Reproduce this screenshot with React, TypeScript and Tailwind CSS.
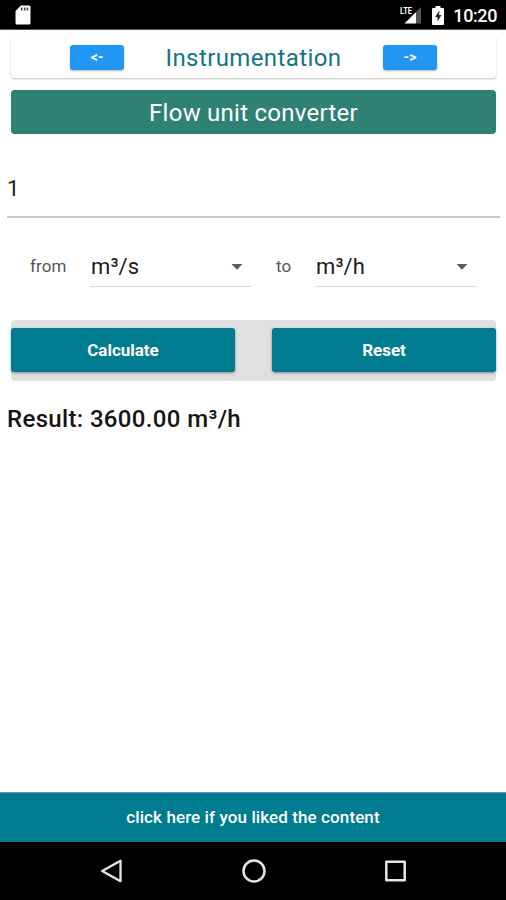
import React, { useState } from 'react';

const UNITS: Record<string, number> = {
  'm³/s': 1,
  'm³/h': 3600,
};

interface UnitSelectProps {
  value: string;
}

const UnitSelect: React.FC<UnitSelectProps> = ({ value }) => (
  <button className="flex h-[39px] w-[162px] items-center justify-between border-b border-[#dcdcdc] pr-[9px] pb-[1px] pl-[1px] text-[22px] tracking-[0.1px] text-[#1c1c1c]">
    <span>{value}</span>
    <svg width="12" height="6" viewBox="0 0 12 6" fill="#5c5c5c" className="mt-[1px]">
      <path d="M0.5 0h11L6 5.8z" />
    </svg>
  </button>
);

const StatusBar = () => (
  <div className="flex h-[30px] shrink-0 items-center border-b border-[#555] bg-black pr-[9px] pl-[15px] text-white">
    {/* SD card */}
    <svg width="16" height="20" viewBox="0 0 16 20" className="mt-[1px]">
      <path d="M6 0.5h8a1.5 1.5 0 0 1 1.5 1.5v16a1.5 1.5 0 0 1-1.5 1.5H2A1.5 1.5 0 0 1 0.5 18V6z" fill="#fff" />
      <path d="M6.7 2.5v3M9.7 2.5v3M12.5 2.5v3" stroke="#444" strokeWidth="1.6" />
    </svg>
    {/* Mobile signal */}
    <svg width="22" height="20" viewBox="0 0 22 20" className="mt-[1px] ml-auto">
      <path d="M21 2v16.500h-5V7z" fill="#555" />
      <path d="M16 7v11.500H4.500z" fill="#fff" />
      <text x="0" y="8.5" fill="#fff" fontFamily="Roboto, sans-serif" fontSize="9.500" fontWeight="700" textLength="12" lengthAdjust="spacingAndGlyphs">LTE</text>
    </svg>
    {/* Battery */}
    <svg width="12" height="19" viewBox="0 0 12 19" className="mt-[1px] ml-[10px]">
      <path d="M3.500 0h5v2H11a1 1 0 0 1 1 1v15a1 1 0 0 1-1 1H1a1 1 0 0 1-1-1V3a1 1 0 0 1 1-1h2.500z" fill="#fff" />
      <path d="M7.500 4.500L3 11h2.500v4.500L9.500 9H7z" fill="#222" />
    </svg>
    <span className="mt-[3px] ml-[9px] text-[18px] leading-none font-medium tracking-[-0.4px]">10:20</span>
  </div>
);

const NavBar = () => (
  <div className="flex h-[58px] shrink-0 items-center justify-between bg-black px-[100px]">
    <svg width="22" height="24" viewBox="0 0 22 24" fill="none" stroke="#e6e6e6" strokeWidth="2.300" strokeLinejoin="round">
      <path d="M20.500 1.800v20.400L2.200 12z" />
    </svg>
    <svg width="24" height="24" viewBox="0 0 24 24" fill="none" stroke="#e6e6e6" strokeWidth="2.500">
      <circle cx="12" cy="12" r="10.500" />
    </svg>
    <svg width="21" height="22" viewBox="0 0 21 22" fill="none" stroke="#e6e6e6" strokeWidth="2.500" strokeLinejoin="round">
      <rect x="1.300" y="1.700" width="18.400" height="18.600" />
    </svg>
  </div>
);

const App: React.FC = () => {
  const [amount, setAmount] = useState('1');
  const [result, setResult] = useState<number | null>(3600);
  const from = 'm³/s';
  const to = 'm³/h';

  const calculate = () => setResult((Number(amount) / UNITS[from]) * UNITS[to]);

  const reset = () => {
    setAmount('');
    setResult(null);
  };

  return (
    <div className="flex h-[900px] w-[506px] flex-col bg-white font-[Roboto,sans-serif]">
      <StatusBar />

      <main className="flex flex-1 flex-col">
        <div className="mr-[10px] ml-[11px] mt-[6px] flex h-[42px] items-center justify-between rounded-[3px] px-[59px] shadow-[0_1px_2px_rgba(0,0,0,0.25)]">
          <button className="h-[25px] w-[54px] rounded-[3px] bg-[#2196f3] text-[14px] leading-none font-bold text-white shadow-[0_1px_2px_rgba(0,0,0,0.3)]">&lt;-</button>
          <h1 className="pt-[1px] text-[24px] leading-none tracking-[0.4px] text-[#127486]">Instrumentation</h1>
          <button className="h-[25px] w-[54px] rounded-[3px] bg-[#2196f3] text-[14px] leading-none font-bold text-white shadow-[0_1px_2px_rgba(0,0,0,0.3)]">-&gt;</button>
        </div>

        <h2 className="mr-[10px] ml-[11px] mt-[12px] flex h-[44px] items-center justify-center rounded-[4px] bg-[#2f8173] pt-[2px] text-[24px] tracking-[0.25px] text-white">
          Flow unit converter
        </h2>

        <input
          value={amount}
          onChange={e => setAmount(e.target.value)}
          className="mr-[6px] ml-[7px] mt-[26px] h-[58px] border-b-2 border-[#c8c8c8] text-[22px] text-[#1c1c1c] outline-none"
        />

        <div className="mt-[30px] flex h-[39px] items-center text-[17px] text-[#555]">
          <span className="w-[90px] pb-[1px] pl-[30px] tracking-[0.1px]">from</span>
          <UnitSelect value={from} />
          <span className="w-[63px] pb-[1px] pl-[24px]">to</span>
          <UnitSelect value={to} />
        </div>

        <div className="mr-[10px] ml-[11px] mt-[33px] flex h-[61px] items-center justify-between rounded-[4px] bg-[#e0e0e0] pb-[1px]">
          <button onClick={calculate} className="h-[44px] w-[224px] rounded-[3px] bg-[#007c91] pt-[2px] text-[17px] font-bold text-white shadow-[0_1px_3px_rgba(0,0,0,0.4)]">Calculate</button>
          <button onClick={reset} className="h-[44px] w-[224px] rounded-[3px] bg-[#007c91] pt-[2px] text-[17px] font-bold text-white shadow-[0_1px_3px_rgba(0,0,0,0.4)]">Reset</button>
        </div>

        <p className="mt-[22px] ml-[7px] text-[24px] leading-[32px] font-medium tracking-[0.35px] text-[#151515]">
          Result: {result !== null && `${result.toFixed(2)} ${to}`}
        </p>

        <button className="mt-auto h-[50px] border-t border-[#5c9eaa] bg-[#007c91] text-[17px] font-medium tracking-[0.1px] text-white">
          click here if you liked the content
        </button>
      </main>

      <NavBar />
    </div>
  );
};

export default App;
